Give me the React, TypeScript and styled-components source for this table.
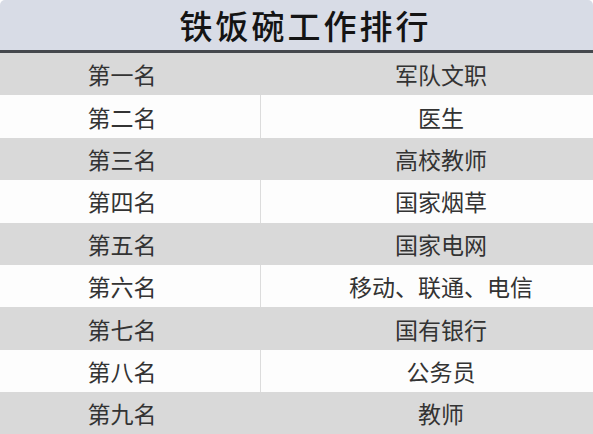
import styled, { createGlobalStyle } from "styled-components";

const GlobalStyle = createGlobalStyle`
  html, body {
    margin: 0;
    padding: 0;
    background: #ffffff;
  }
  body {
    font-family: "Noto Sans CJK SC", "Noto Sans", sans-serif;
  }
`;

const Sheet = styled.div`
  width: 593px;
  height: 434px;
  overflow: hidden;
  background: #ffffff;
`;

const Title = styled.div`
  height: 53px;
  display: flex;
  align-items: center;
  justify-content: center;
  padding-left: 18px;
  box-sizing: border-box;
  background: #d8dce6;
  border-radius: 5px 5px 0 0;
  border-bottom: 3px solid #45484d;
  font-size: 33px;
  font-weight: 500;
  letter-spacing: 3px;
  color: #141414;
`;

const Row = styled.div<{ $shaded: boolean }>`
  display: grid;
  grid-template-columns: 260px 1fr;
  height: 42.4px;
  background: ${(p) => (p.$shaded ? "#d9d9d9" : "#fdfdfd")};
`;

const Cell = styled.div<{ $side: "left" | "right"; $shaded: boolean }>`
  display: flex;
  align-items: center;
  justify-content: center;
  font-size: 23px;
  color: #333333;
  padding: ${(p) => (p.$side === "left" ? "0 16px 0 0" : "0 0 0 28px")};
  border-left: ${(p) =>
    p.$side === "right"
      ? `1px solid ${p.$shaded ? "#d9d9d9" : "#dcdcdc"}`
      : "none"};
`;

const rows = [
  ["第一名", "军队文职"],
  ["第二名", "医生"],
  ["第三名", "高校教师"],
  ["第四名", "国家烟草"],
  ["第五名", "国家电网"],
  ["第六名", "移动、联通、电信"],
  ["第七名", "国有银行"],
  ["第八名", "公务员"],
  ["第九名", "教师"],
];

export default function App() {
  return (
    <>
      <GlobalStyle />
      <Sheet>
        <Title>铁饭碗工作排行</Title>
        {rows.map(([rank, job], i) => {
          const shaded = i % 2 === 0;
          return (
            <Row key={rank} $shaded={shaded}>
              <Cell $side="left" $shaded={shaded}>
                {rank}
              </Cell>
              <Cell $side="right" $shaded={shaded}>
                {job}
              </Cell>
            </Row>
          );
        })}
      </Sheet>
    </>
  );
}
